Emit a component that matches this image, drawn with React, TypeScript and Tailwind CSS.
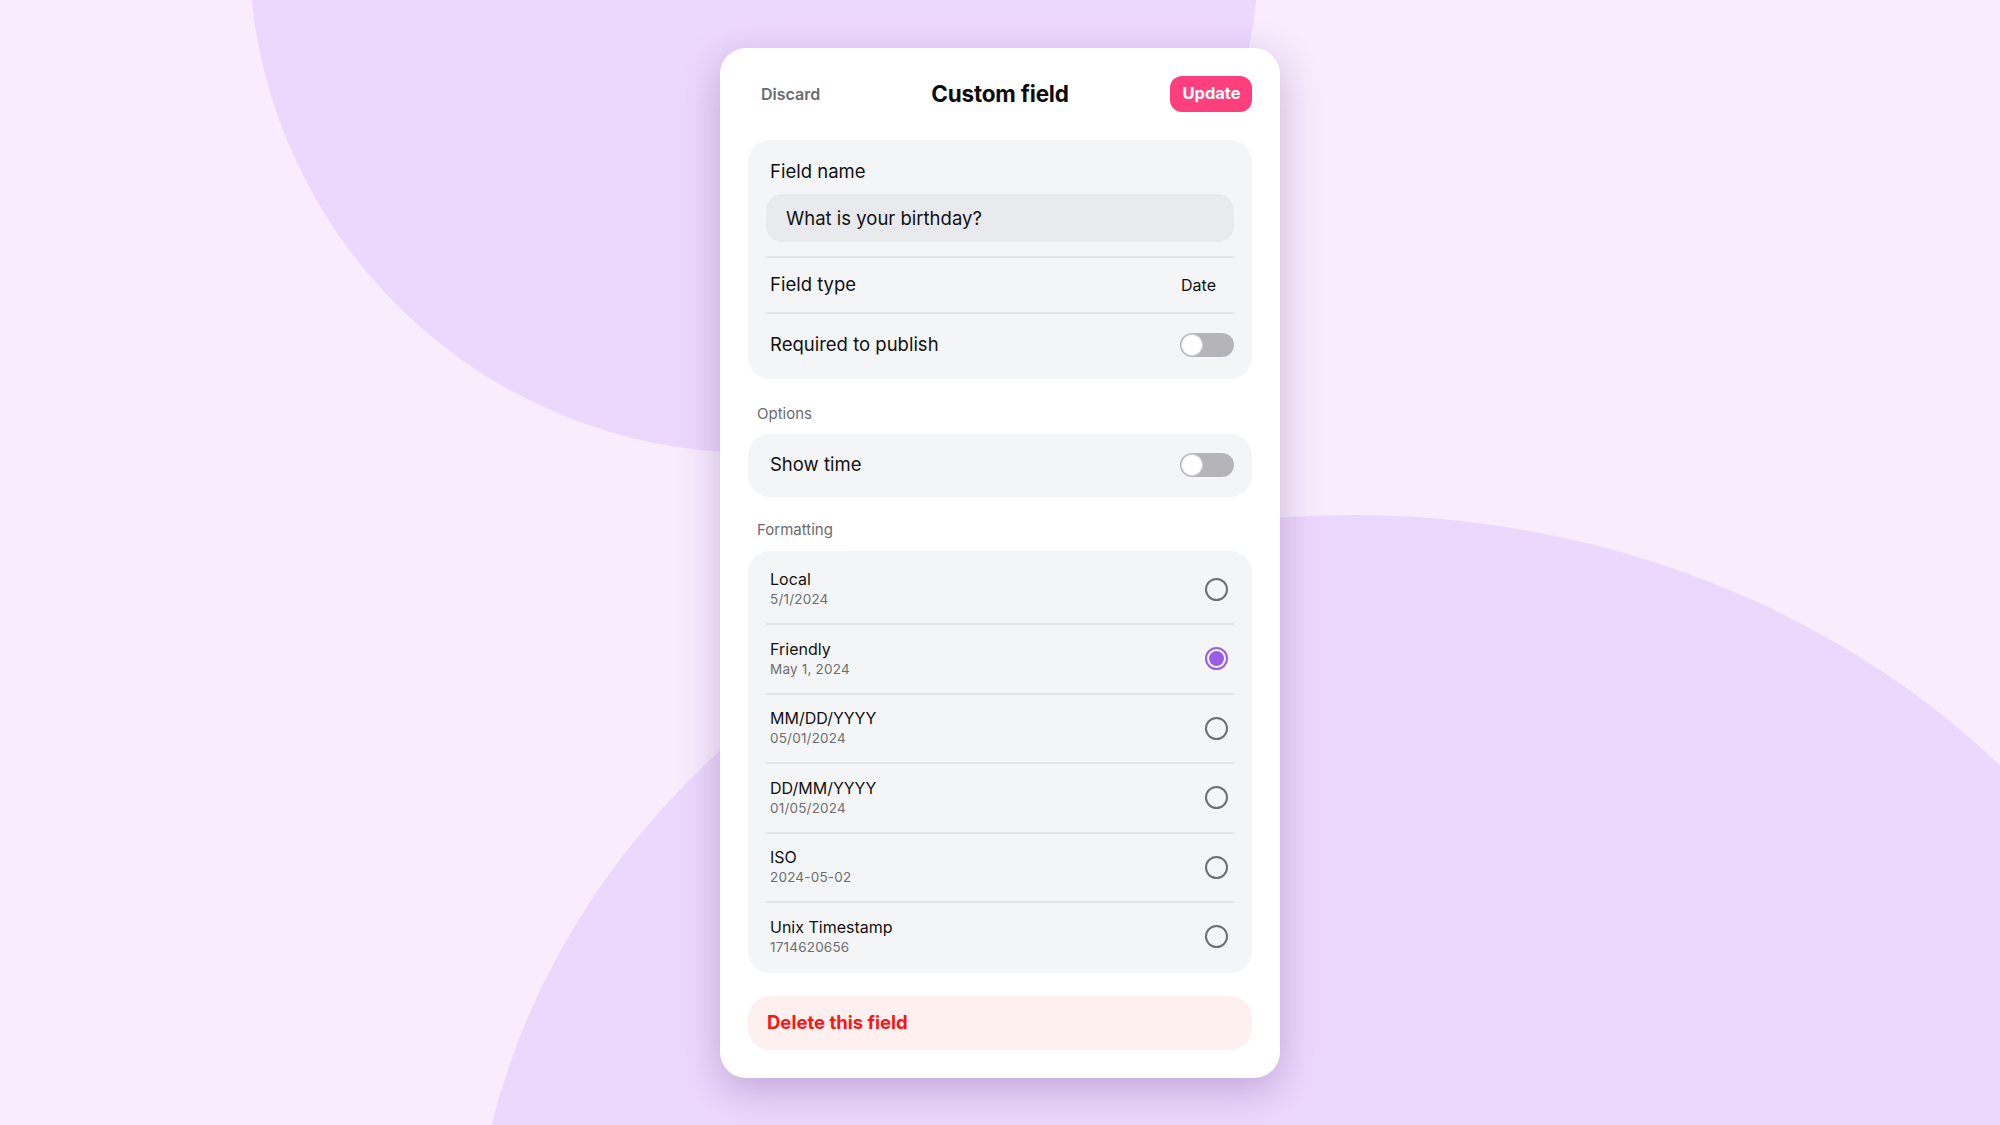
import { useState } from 'react'

const formats = [
  { id: 'local', name: 'Local', sample: '5/1/2024' },
  { id: 'friendly', name: 'Friendly', sample: 'May 1, 2024' },
  { id: 'us', name: 'MM/DD/YYYY', sample: '05/01/2024' },
  { id: 'eu', name: 'DD/MM/YYYY', sample: '01/05/2024' },
  { id: 'iso', name: 'ISO', sample: '2024-05-02' },
  { id: 'unix', name: 'Unix Timestamp', sample: '1714620656' },
]

function Toggle({ on, onChange }: { on: boolean; onChange: (v: boolean) => void }) {
  return (
    <button
      type="button"
      onClick={() => onChange(!on)}
      className={`relative h-[24px] w-[54px] shrink-0 rounded-full transition ${on ? 'bg-[#9b5de5]' : 'bg-[#b5b5b9]'}`}
    >
      <span
        className={`absolute top-[1px] h-[22px] w-[22px] rounded-full border border-[#d6d6d8] bg-white transition-all ${on ? 'left-[31px]' : 'left-[1px]'}`}
      />
    </button>
  )
}

function Radio({ checked }: { checked: boolean }) {
  if (checked) {
    return (
      <span className="flex h-[23px] w-[23px] items-center justify-center rounded-full border-2 border-[#9b5de5]">
        <span className="h-[15px] w-[15px] rounded-full bg-[#9b5de5]" />
      </span>
    )
  }
  return <span className="block h-[23px] w-[23px] rounded-full border-2 border-[#6e6e70]" />
}

function Divider() {
  return <div className="h-[2px] bg-[#e4e5e8]" />
}

export default function App() {
  const [required, setRequired] = useState(false)
  const [showTime, setShowTime] = useState(false)
  const [format, setFormat] = useState('friendly')
  const [name, setName] = useState('What is your birthday?')

  return (
    <div
      className="relative flex min-h-screen items-center justify-center overflow-hidden bg-[#f8ecfd] text-[#111111]"
      style={{ fontFamily: 'Inter, "Noto Sans", sans-serif' }}
    >
      {/* background blobs */}
      <div className="absolute left-[249px] top-[-557px] h-[1010px] w-[1010px] rounded-full bg-[#edd8fd]" />
      <div className="absolute left-[471px] top-[515px] h-[1554px] w-[1762px] rounded-[50%] bg-[#edd8fd]" />

      <div className="relative flex w-[560px] flex-col rounded-[26px] bg-white px-[28px] pb-[28px] pt-[28px] shadow-[0_12px_40px_rgba(90,50,130,0.3)]">
        {/* header */}
        <div className="grid h-[36px] grid-cols-[1fr_auto_1fr] items-center">
          <button type="button" className="justify-self-start pl-[13px] pt-[1px] text-[16px] font-semibold text-[#6b6b6e]">
            Discard
          </button>
          <h1 className="pt-[1px] text-[22.5px] font-bold tracking-[-0.2px] text-[#0d0d0d]">Custom field</h1>
          <button
            type="button"
            className="h-[36px] w-[82px] justify-self-end rounded-[12px] bg-[#fe3f7e] pl-[1px] text-[16.5px] font-bold text-white"
          >
            Update
          </button>
        </div>

        {/* main section */}
        <div className="mt-[28px] rounded-[22px] bg-[#f4f5f7] px-[18px]">
          <div className="pb-[14px] pt-[19px]">
            <label className="block pl-[4px] text-[18.5px] leading-[24px]">Field name</label>
            <input
              value={name}
              onChange={(e) => setName(e.target.value)}
              className="mt-[11px] h-[48px] w-full rounded-[16px] bg-[#e9eaee] px-[20px] text-[18.5px] text-[#111] outline-none"
            />
          </div>
          <Divider />
          <div className="flex h-[54px] items-center justify-between pl-[4px] pr-[18px]">
            <span className="text-[18.5px]">Field type</span>
            <span className="text-[16px]">Date</span>
          </div>
          <Divider />
          <div className="flex h-[62px] items-center justify-between pl-[4px]">
            <span className="text-[18.5px]">Required to publish</span>
            <Toggle on={required} onChange={setRequired} />
          </div>
          <div className="h-[3px]" />
        </div>

        {/* options */}
        <div className="mt-[26px] pl-[9px] text-[15px] leading-[18px] text-[#6b6b6e]">Options</div>
        <div className="mt-[11px] flex h-[63px] items-center justify-between rounded-[22px] bg-[#f4f5f7] pl-[22px] pr-[18px]">
          <span className="text-[18.5px]">Show time</span>
          <Toggle on={showTime} onChange={setShowTime} />
        </div>

        {/* formatting */}
        <div className="mt-[24px] pl-[9px] text-[15px] leading-[18px] text-[#6b6b6e]">Formatting</div>
        <div className="mt-[12px] rounded-[22px] bg-[#f4f5f7] px-[18px] pb-[2px] pt-[5px]">
          {formats.map((f, i) => (
            <div key={f.id}>
              {i > 0 && <Divider />}
              <button
                type="button"
                onClick={() => setFormat(f.id)}
                className="flex h-[67.5px] w-full items-center justify-between pl-[4px] pr-[6px] text-left"
              >
                <span className="flex flex-col">
                  <span className="text-[16px] leading-[20px]">{f.name}</span>
                  <span className="text-[13.5px] leading-[20px] tracking-[0.2px] text-[#6e6e70]">{f.sample}</span>
                </span>
                <Radio checked={format === f.id} />
              </button>
            </div>
          ))}
        </div>

        {/* delete */}
        <button
          type="button"
          className="mt-[23px] flex h-[54px] items-center rounded-[22px] bg-[#fff0f0] px-[18px] pl-[19px] text-[18.5px] font-bold text-[#ff1414]"
        >
          Delete this field
        </button>
      </div>
    </div>
  )
}
